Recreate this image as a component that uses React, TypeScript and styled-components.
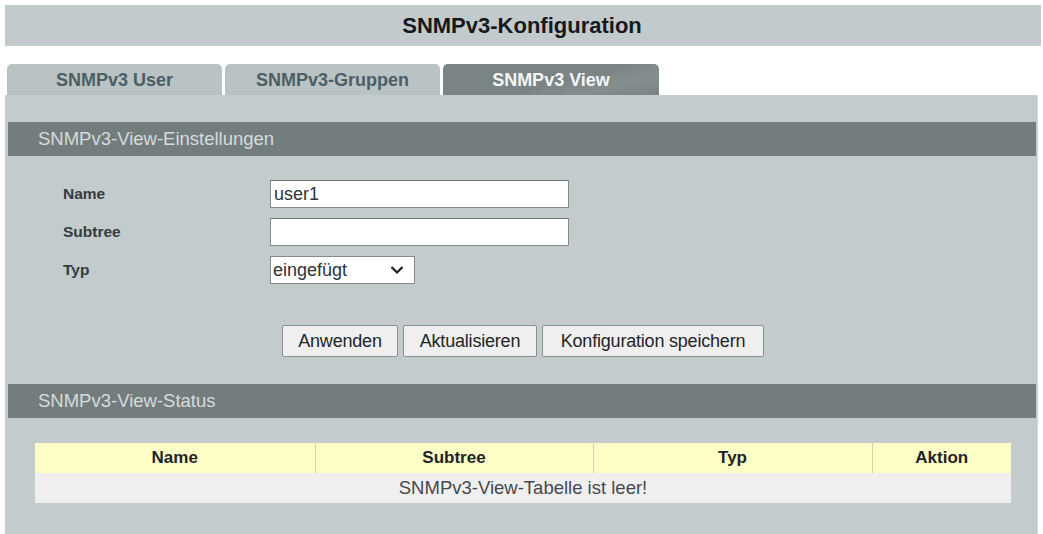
import React from "react";
import styled, { createGlobalStyle } from "styled-components";

const Global = createGlobalStyle`
  html, body { margin: 0; padding: 0; background: #ffffff; }
  body { font-family: "Liberation Sans", Arial, sans-serif; }
  * { box-sizing: border-box; }
`;

const Page = styled.div`
  width: 1043px;
  height: 534px;
  padding: 5px 2px 0 5px;
  display: flex;
  flex-direction: column;
  overflow: hidden;
`;

const TitleBar = styled.h1`
  margin: 0;
  height: 41px;
  background: #c3cacb;
  display: flex;
  align-items: center;
  justify-content: center;
  font-size: 22px;
  font-weight: bold;
  color: #15191c;
  padding-right: 2px;
`;

const TabRow = styled.div`
  display: flex;
  gap: 3px;
  margin-top: 18px;
  padding-left: 2px;
  height: 31px;
`;

const Tab = styled.div<{ $active?: boolean }>`
  width: ${(p) => (p.$active ? 216 : 215)}px;
  height: 31px;
  border-radius: 5px 5px 0 0;
  display: flex;
  align-items: center;
  justify-content: center;
  font-size: 18px;
  font-weight: bold;
  color: ${(p) => (p.$active ? "#f4f6f6" : "#4c5e66")};
  background: ${(p) =>
    p.$active
      ? "linear-gradient(165deg, #7a8484 0%, #7a8484 55%, #858f8f 75%, #7a8484 100%)"
      : "#bac3c4"};
  padding-top: 1px;
`;

const Panel = styled.div`
  flex: 1;
  width: 1033px;
  background: #c3cbcc;
  padding: 27px 1px 0 3px;
  border-right: 1px solid #d3d9da;
`;

const SectionHeader = styled.div`
  height: 34px;
  background: #737d7e;
  color: #d6dbdc;
  font-size: 18.5px;
  display: flex;
  align-items: center;
  padding-left: 30px;
  padding-bottom: 1px;
`;

const Form = styled.div`
  display: grid;
  grid-template-columns: 207px auto;
  grid-auto-rows: 28px;
  row-gap: 10px;
  align-items: center;
  padding: 24px 0 0 55px;
`;

const Label = styled.label`
  font-size: 15.5px;
  font-weight: bold;
  color: #363b40;
`;

const TextInput = styled.input`
  width: 299px;
  height: 28px;
  border: 1px solid #858a8c;
  border-top-color: #6f7476;
  background: #ffffff;
  font-family: "Liberation Sans", Arial, sans-serif;
  font-size: 18px;
  color: #2f3336;
  padding: 0 3px;
  outline: none;
`;

const SelectWrap = styled.span`
  position: relative;
  display: inline-block;
  width: 145px;
  height: 28px;
`;

const Select = styled.select`
  appearance: none;
  -webkit-appearance: none;
  width: 100%;
  height: 100%;
  border: 1px solid #858a8c;
  border-radius: 0;
  background: #ffffff;
  font-family: "Liberation Sans", Arial, sans-serif;
  font-size: 18px;
  color: #2f3336;
  padding: 0 28px 0 2px;
  outline: none;
`;

const Chevron = styled.svg`
  position: absolute;
  right: 11px;
  top: 9px;
  width: 14px;
  height: 10px;
  pointer-events: none;
`;

const ButtonRow = styled.div`
  display: flex;
  gap: 5px;
  padding: 41px 0 0 274px;
`;

const Button = styled.button<{ $w: number }>`
  width: ${(p) => p.$w}px;
  height: 32px;
  background: #efefef;
  border: 1px solid #8c8f91;
  border-radius: 2px;
  font-family: "Liberation Sans", Arial, sans-serif;
  font-size: 18px;
  color: #232527;
  padding: 0;
  letter-spacing: -0.2px;
`;

const StatusSection = styled.div`
  margin-top: 27px;
`;

const TableWrap = styled.div`
  padding: 25px 0 0 27px;
`;

const Table = styled.table`
  width: 976px;
  border-collapse: collapse;
  table-layout: fixed;
`;

const Th = styled.th`
  height: 30px;
  background: #fdfdc6;
  border-left: 1px solid #d2d2b4;
  font-size: 17px;
  font-weight: bold;
  color: #1f2326;
  padding: 0;
  &:first-child { border-left: none; }
`;

const Td = styled.td`
  height: 30px;
  background: #efefef;
  text-align: center;
  font-size: 18.5px;
  color: #46494b;
  padding: 0;
`;

export default function App() {
  return (
    <>
      <Global />
      <Page>
        <TitleBar>SNMPv3-Konfiguration</TitleBar>
        <TabRow>
          <Tab>SNMPv3 User</Tab>
          <Tab>SNMPv3-Gruppen</Tab>
          <Tab $active>SNMPv3 View</Tab>
        </TabRow>
        <Panel>
          <SectionHeader>SNMPv3-View-Einstellungen</SectionHeader>
          <Form>
            <Label>Name</Label>
            <TextInput defaultValue="user1" />
            <Label>Subtree</Label>
            <TextInput defaultValue="" />
            <Label>Typ</Label>
            <SelectWrap>
              <Select defaultValue="eingefügt">
                <option>eingefügt</option>
                <option>ausgeschlossen</option>
              </Select>
              <Chevron viewBox="0 0 14 10">
                <path d="M1.5 2 L7 7.5 L12.5 2" fill="none" stroke="#1c1e20" strokeWidth="2.2" />
              </Chevron>
            </SelectWrap>
          </Form>
          <ButtonRow>
            <Button $w={116}>Anwenden</Button>
            <Button $w={134}>Aktualisieren</Button>
            <Button $w={222}>Konfiguration speichern</Button>
          </ButtonRow>
          <StatusSection>
            <SectionHeader>SNMPv3-View-Status</SectionHeader>
            <TableWrap>
              <Table>
                <colgroup>
                  <col style={{ width: 280 }} />
                  <col style={{ width: 278 }} />
                  <col style={{ width: 279 }} />
                  <col style={{ width: 139 }} />
                </colgroup>
                <thead>
                  <tr>
                    <Th>Name</Th>
                    <Th>Subtree</Th>
                    <Th>Typ</Th>
                    <Th>Aktion</Th>
                  </tr>
                </thead>
                <tbody>
                  <tr>
                    <Td colSpan={4}>SNMPv3-View-Tabelle ist leer!</Td>
                  </tr>
                </tbody>
              </Table>
            </TableWrap>
          </StatusSection>
        </Panel>
      </Page>
    </>
  );
}
